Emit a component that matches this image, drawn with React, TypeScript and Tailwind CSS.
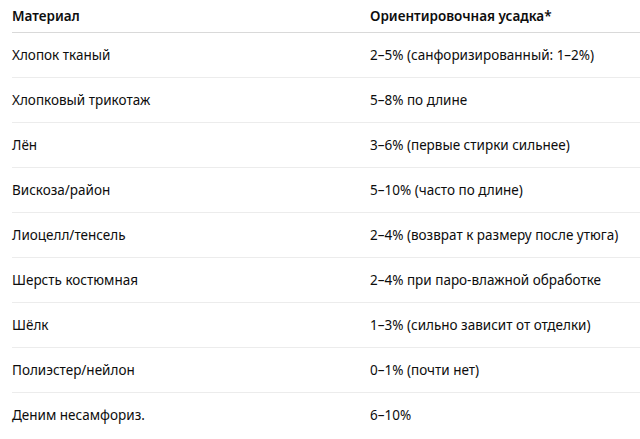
const rows: [string, string][] = [
  ['Хлопок тканый', '2–5% (санфоризированный: 1–2%)'],
  ['Хлопковый трикотаж', '5–8% по длине'],
  ['Лён', '3–6% (первые стирки сильнее)'],
  ['Вискоза/район', '5–10% (часто по длине)'],
  ['Лиоцелл/тенсель', '2–4% (возврат к размеру после утюга)'],
  ['Шерсть костюмная', '2–4% при паро-влажной обработке'],
  ['Шёлк', '1–3% (сильно зависит от отделки)'],
  ['Полиэстер/нейлон', '0–1% (почти нет)'],
  ['Деним несамфориз.', '6–10%'],
]

export default function App() {
  return (
    <div className="w-[640px] h-[439px] bg-white overflow-hidden pl-3 text-[13.5px] text-[#0d0d0d] font-['Noto_Sans',sans-serif]">
      <div className="flex h-[33px] items-center border-b border-[#d9d9d9] font-semibold">
        <div className="w-[358px]">Материал</div>
        <div>Ориентировочная усадка*</div>
      </div>
      {rows.map(([m, v], i) => (
        <div
          key={m}
          className={`flex h-[45px] items-center ${i < rows.length - 1 ? 'border-b border-[#ececec]' : ''}`}
        >
          <div className="w-[358px]">{m}</div>
          <div>{v}</div>
        </div>
      ))}
    </div>
  )
}
